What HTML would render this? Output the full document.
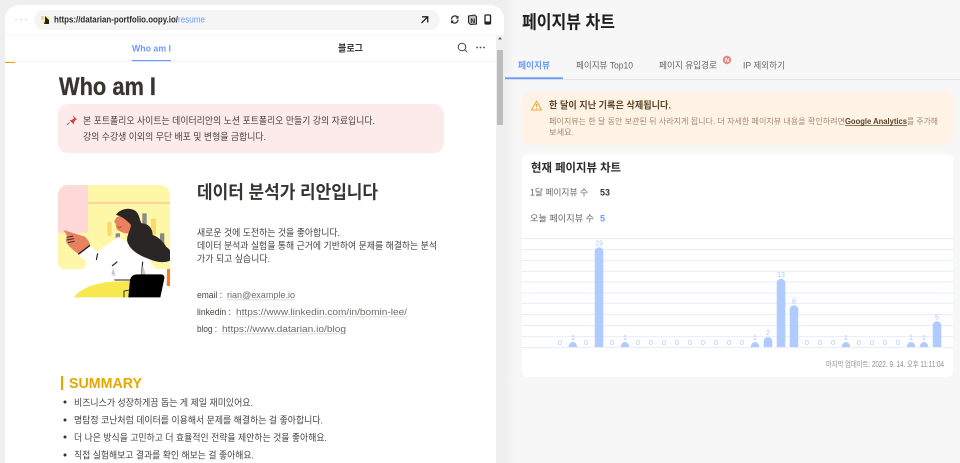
<!DOCTYPE html>
<html lang="ko"><head><meta charset="utf-8"><title>페이지뷰 차트</title>
<style>
html,body{margin:0;padding:0;width:960px;height:463px;overflow:hidden;background:#f7f7f7}
svg{display:block;filter:blur(.3px)}
text{font-family:"Liberation Sans","Noto Sans CJK KR",sans-serif;white-space:pre}
.t{fill:#45433f;font-size:9.5px}
.b{font-weight:700}
.g{fill:#6f6c68;font-size:9px}
.v{fill:#a8c4ff;font-size:7px;text-anchor:middle}
</style></head><body>
<svg width="960" height="463" viewBox="0 0 960 463" xmlns="http://www.w3.org/2000/svg">
<defs><linearGradient id="sh" x1="0" x2="1" y1="0" y2="0"><stop offset="0" stop-color="#eeeeee"/><stop offset="1" stop-color="#f7f7f7"/></linearGradient></defs>
<rect width="960" height="463" fill="#f7f7f7"/>
<rect x="504" width="10" height="463" fill="url(#sh)"/>
<rect x="0" width="504" height="463" fill="#efefef"/>
<path d="M5 463V19a14 14 0 0 1 14-14H490a14 14 0 0 1 14 14V463Z" fill="#fff"/>
<rect x="496" y="35" width="8" height="428" fill="#f0f0f0"/>
<rect x="497" y="50" width="6" height="75" fill="#bdbdbd"/>
<path d="M500 37l-2 2.400h4z" fill="#555"/>
<rect x="5" y="34.500" width="491" height="0.700" fill="#f0f0f0"/>
<rect x="5" y="61" width="491" height="0.700" fill="#f0f0f0"/>
<!-- browser bar -->
<circle cx="16" cy="19.500" r="1" fill="#e0e0e0"/><circle cx="21" cy="19.500" r="1" fill="#e0e0e0"/><circle cx="26" cy="19.500" r="1" fill="#e0e0e0"/>
<rect x="34" y="10" width="406" height="20" rx="10" fill="#f5f5f5"/>
<rect x="41" y="16" width="9" height="8" rx="1.500" fill="#fff3a8"/><rect x="41" y="16" width="3" height="4" fill="#f9c9c9"/><path d="M45 16l4 4v4h-5l1-3z" fill="#222"/>
<text x="54" y="22.500" font-size="9" class="b" fill="#2b2b2b" textLength="124" lengthAdjust="spacingAndGlyphs">https://datarian-portfolio.oopy.io/</text>
<text x="178" y="22.500" font-size="9" fill="#6a9bff" textLength="27" lengthAdjust="spacingAndGlyphs">resume</text>
<path d="M421.500 23l6-6M422 16.800h5.700v5.700" stroke="#222" stroke-width="1.300" fill="none"/>
<path d="M451.500 19.500a3.500 3.500 0 0 1 6-2.500M458 19.500a3.500 3.500 0 0 1-6 2.500" stroke="#222" stroke-width="1.200" fill="none"/><path d="M458.500 15.500v3h-3zM451 23.500v-3h3z" fill="#222"/>
<path d="M468.500 16l6-1 2 1.500v7.500l-6 .5-2-2z" fill="#bbb" stroke="#222" stroke-width="1"/><text x="470.500" y="23" font-size="6.500" class="b" fill="#222">N</text>
<rect x="485" y="15" width="5.500" height="9" rx="1" fill="#fff" stroke="#222" stroke-width="1.300"/><rect x="485" y="21.500" width="5.500" height="2.500" fill="#222"/>
<!-- nav -->
<text x="132" y="51.500" font-size="9.500" class="b" fill="#6a9bff" textLength="39" lengthAdjust="spacingAndGlyphs">Who am I</text>
<rect x="132" y="60" width="39" height="1.200" fill="#6a9bff"/>
<text x="338" y="51.500" font-size="9.500" class="b" fill="#37352f" textLength="25" lengthAdjust="spacingAndGlyphs">블로그</text>
<circle cx="462" cy="47" r="3.800" fill="none" stroke="#444" stroke-width="1"/><path d="M464.800 49.800l2.400 2.400" stroke="#444" stroke-width="1"/>
<circle cx="477" cy="47.500" r=".9" fill="#444"/><circle cx="480.500" cy="47.500" r=".9" fill="#444"/><circle cx="484" cy="47.500" r=".9" fill="#444"/>
<rect x="5" y="62" width="10" height="1" fill="#f0a800"/>
<!-- content -->
<text x="59" y="95" font-size="25" class="b" fill="#37352f" stroke="#37352f" stroke-width=".3" textLength="97" lengthAdjust="spacingAndGlyphs">Who am I</text>
<rect x="58" y="104" width="386" height="49" rx="10" fill="#fdeaea"/>
<path d="M72.500 115l4.500 4.500-1.500 .5-1.500 2.500-.2 2-4.300-4.300 2-.2 2.500-1.500z" fill="#d9433f"/><path d="M69.500 122.500l-2.500 2.500" stroke="#777" stroke-width=".9"/>
<text x="83" y="124" class="t" textLength="292" lengthAdjust="spacingAndGlyphs">본 포트폴리오 사이트는 데이터리안의 노션 포트폴리오 만들기 강의 자료입니다.</text>
<text x="83" y="140" class="t" textLength="183" lengthAdjust="spacingAndGlyphs">강의 수강생 이외의 무단 배포 및 변형을 금합니다.</text>
<!-- illustration -->
<path d="M58 263V195a10 10 0 0 1 10-10H160a10 10 0 0 1 10 10V269H64a6 6 0 0 1-6-6Z" fill="#fff7a8"/>
<path d="M58 233V195a10 10 0 0 1 10-10H88V233Z" fill="#ffd8d8"/>
<rect x="88" y="202" width="82" height="1.800" fill="#fbcf9f"/>
<g transform="translate(50 180) scale(.33333)">
<rect x="172" y="125" width="13" height="43" rx="5" fill="#fcd96f"/>
<rect x="277" y="100" width="13" height="35" fill="#8a8a8a"/>
<rect x="303" y="115" width="15" height="50" rx="5" fill="#fcd96f"/>
<rect x="330" y="160" width="13" height="30" fill="#8a8a8a"/>
<rect x="197" y="160" width="13" height="20" fill="#8a8a8a"/>
<path d="M85 225L120 195L140 215L205 170L250 200L300 240L335 300L360 352H72V268H100L110 245Z" fill="#fff"/>
<path d="M200 112C194 120 192 124 194 128L198 132C197 142 200 150 208 153L225 160L240 160L248 125L215 105Z" fill="#e9815f"/>
<path d="M198 105C208 88 235 80 255 92C270 102 268 122 275 130C295 130 308 145 308 165C325 170 345 190 348 200C355 205 360 210 360 212V242C345 250 318 246 300 238C270 228 240 212 232 185C228 170 240 155 243 135C232 122 215 108 198 105Z" fill="#2b2626"/>
<path d="M203 140C208 143 212 142 215 140" stroke="#7a3a28" stroke-width="2" fill="none"/>
<path d="M40 150L105 170C115 180 118 188 120 195L85 222C72 212 55 200 48 185L50 165Z" fill="#e9815f"/>
<path d="M85 223L120 196" stroke="#222" stroke-width="4"/>
<path d="M50 172L70 168M50 180L72 176M54 188L74 184" stroke="#333" stroke-width="3"/>
<path d="M143 220L139 240M202 245L186 258M278 245L275 285" stroke="#222" stroke-width="3.500"/>
<path d="M190 262L196 290L184 282ZM278 255L288 285L274 288Z" fill="#c9c9c9"/>
<path d="M72 352C85 330 130 308 190 305L240 303V352Z" fill="#f6e84e"/>
<path d="M193 300H240" stroke="#222" stroke-width="3"/>
<path d="M222 352V333L240 330" stroke="#333" stroke-width="3" fill="none"/>
<path d="M240 300C243 288 250 283 262 283H332C340 283 344 288 343 296L331 352H235Z" fill="#000"/>
<path d="M351 267H360V318H354C351 318 350 316 350 312Z" fill="#ff7a1f"/>
</g>
<!-- intro -->
<text x="197" y="198.500" font-size="18" class="b" fill="#37352f" textLength="181" lengthAdjust="spacingAndGlyphs">데이터 분석가 리안입니다</text>
<text x="197" y="236" class="t" textLength="143" lengthAdjust="spacingAndGlyphs">새로운 것에 도전하는 것을 좋아합니다.</text>
<text x="197" y="249" class="t" textLength="240" lengthAdjust="spacingAndGlyphs">데이터 분석과 실험을 통해 근거에 기반하여 문제를 해결하는 분석</text>
<text x="197" y="262" class="t" textLength="73" lengthAdjust="spacingAndGlyphs">가가 되고 싶습니다.</text>
<text x="197" y="298" class="t" textLength="25" lengthAdjust="spacingAndGlyphs">email :</text>
<text x="227" y="298" class="g" textLength="68" lengthAdjust="spacingAndGlyphs">rian@example.io</text><rect x="227" y="299.500" width="68" height=".7" fill="#ccc"/>
<text x="197" y="315" class="t" textLength="34" lengthAdjust="spacingAndGlyphs">linkedin :</text>
<text x="236" y="315" class="g" textLength="171" lengthAdjust="spacingAndGlyphs">https://www.linkedin.com/in/bomin-lee/</text><rect x="236" y="316.500" width="171" height=".7" fill="#ccc"/>
<text x="197" y="332" class="t" textLength="20" lengthAdjust="spacingAndGlyphs">blog :</text>
<text x="222" y="332" class="g" textLength="124" lengthAdjust="spacingAndGlyphs">https://www.datarian.io/blog</text><rect x="222" y="333.500" width="124" height=".7" fill="#ccc"/>
<!-- summary -->
<rect x="61" y="376" width="2.200" height="14" fill="#e5a800"/>
<text x="69" y="388" font-size="14.500" class="b" fill="#e5a800" textLength="73" lengthAdjust="spacingAndGlyphs">SUMMARY</text>
<circle cx="65" cy="402" r="1.500" fill="#333"/><circle cx="65" cy="420" r="1.500" fill="#333"/><circle cx="65" cy="437" r="1.500" fill="#333"/><circle cx="65" cy="455" r="1.500" fill="#333"/>
<text x="74" y="406" class="t" textLength="179" lengthAdjust="spacingAndGlyphs">비즈니스가 성장하게끔 돕는 게 제일 재미있어요.</text>
<text x="74" y="423.500" class="t" textLength="249" lengthAdjust="spacingAndGlyphs">명탐정 코난처럼 데이터를 이용해서 문제를 해결하는 걸 좋아합니다.</text>
<text x="74" y="441" class="t" textLength="253" lengthAdjust="spacingAndGlyphs">더 나은 방식을 고민하고 더 효율적인 전략을 제안하는 것을 좋아해요.</text>
<text x="74" y="458.500" class="t" textLength="180" lengthAdjust="spacingAndGlyphs">직접 실험해보고 결과를 확인 해보는 걸 좋아해요.</text>
<!-- right -->
<text x="522" y="28.500" font-size="18" class="b" fill="#1f1f1f" textLength="93" lengthAdjust="spacingAndGlyphs">페이지뷰 차트</text>
<rect x="505" y="79" width="455" height="1" fill="#e3e3e3"/>
<rect x="505" y="77.300" width="58" height="1.800" fill="#6a9bff"/>
<text x="518" y="68.500" font-size="9" class="b" fill="#6a9bff" textLength="32" lengthAdjust="spacingAndGlyphs">페이지뷰</text>
<text x="576" y="68.500" font-size="9" fill="#666" textLength="57" lengthAdjust="spacingAndGlyphs">페이지뷰 Top10</text>
<text x="659" y="68.500" font-size="9" fill="#666" textLength="58" lengthAdjust="spacingAndGlyphs">페이지 유입경로</text>
<circle cx="727" cy="60" r="4.200" fill="#e38b85"/><text x="727" y="62" font-size="5.500" class="b" fill="#fff" text-anchor="middle">N</text>
<text x="743" y="68.500" font-size="9" fill="#666" textLength="42" lengthAdjust="spacingAndGlyphs">IP 제외하기</text>
<rect x="522" y="92" width="431" height="53" rx="8" fill="#fff3e6"/>
<path d="M536.500 101l5 9h-10z" fill="none" stroke="#f0a73a" stroke-width="1.100" stroke-linejoin="round"/><path d="M536.500 104v3M536.500 108v1" stroke="#f0a73a" stroke-width="1"/>
<text x="549" y="108.500" font-size="9.500" class="b" fill="#5a4326" textLength="122" lengthAdjust="spacingAndGlyphs">한 달이 지난 기록은 삭제됩니다.</text>
<text x="549" y="124" font-size="8.200" fill="#a38c72" textLength="296" lengthAdjust="spacingAndGlyphs">페이지뷰는 한 달 동안 보관된 뒤 사라지게 됩니다. 더 자세한 페이지뷰 내용을 확인하려면</text>
<text x="845" y="124" font-size="8.500" class="b" fill="#5a4326" textLength="62" lengthAdjust="spacingAndGlyphs">Google Analytics</text><rect x="845" y="125.300" width="62" height=".7" fill="#5a4326"/>
<text x="907" y="124" font-size="8.200" fill="#a38c72" textLength="31" lengthAdjust="spacingAndGlyphs">를 주가해</text>
<text x="549" y="135" font-size="8.200" fill="#a38c72" textLength="25" lengthAdjust="spacingAndGlyphs">보세요.</text>
<!-- chart card -->
<rect x="522" y="154" width="431" height="223" rx="6" fill="#fff"/>
<text x="531" y="171.500" font-size="11.500" class="b" fill="#2b2b2b" textLength="90" lengthAdjust="spacingAndGlyphs">현재 페이지뷰 차트</text>
<text x="530" y="195.500" font-size="9" fill="#666" textLength="58" lengthAdjust="spacingAndGlyphs">1달 페이지뷰 수</text>
<text x="600" y="195.500" font-size="9" class="b" fill="#333" textLength="10" lengthAdjust="spacingAndGlyphs">53</text>
<text x="530" y="221.500" font-size="9" fill="#666" textLength="64" lengthAdjust="spacingAndGlyphs">오늘 페이지뷰 수</text>
<text x="600" y="221.500" font-size="9" class="b" fill="#6a9bff">5</text>
<g fill="#e6eeff">
<rect x="522" y="238" width="431" height="1.100"/><rect x="522" y="249" width="431" height="1.100"/><rect x="522" y="260" width="431" height="1.100"/><rect x="522" y="271" width="431" height="1.100"/><rect x="522" y="281.500" width="431" height="1.100"/><rect x="522" y="292.500" width="431" height="1.100"/><rect x="522" y="303" width="431" height="1.100"/><rect x="522" y="314" width="431" height="1.100"/><rect x="522" y="325" width="431" height="1.100"/><rect x="522" y="336" width="431" height="1.100"/><rect x="522" y="347" width="431" height="1.100"/>
</g>
<g fill="#b0cbff">
<path d="M568.500 347a4.300 5 0 0 1 8.600 0z"/>
<path d="M620.700 347a4.300 5 0 0 1 8.600 0z"/>
<path d="M750.700 347a4.300 5 0 0 1 8.600 0z"/>
<path d="M841.700 347a4.300 5 0 0 1 8.600 0z"/>
<path d="M906.700 347a4.300 5 0 0 1 8.600 0z"/>
<path d="M919.700 347a4.300 5 0 0 1 8.600 0z"/>
<path d="M594.700 347V251.500a4.300 4.300 0 0 1 8.600 0V347z"/>
<path d="M763.700 347v-5.700a4.300 4.300 0 0 1 8.600 0V347z"/>
<path d="M776.700 347V283a4.300 4.300 0 0 1 8.600 0V347z"/>
<path d="M789.700 347V309.600a4.300 4.300 0 0 1 8.600 0V347z"/>
<path d="M932.700 347V325.600a4.300 4.300 0 0 1 8.600 0V347z"/>
</g>
<g>
<text class="v" x="560" y="345">0</text><text class="v" x="573" y="340">1</text><text class="v" x="586" y="345">0</text><text class="v" x="599" y="245.500">19</text><text class="v" x="612" y="345">0</text><text class="v" x="625" y="340">1</text>
<text class="v" x="638" y="345">0</text><text class="v" x="651" y="345">0</text><text class="v" x="664" y="345">0</text><text class="v" x="677" y="345">0</text><text class="v" x="690" y="345">0</text><text class="v" x="703" y="345">0</text><text class="v" x="716" y="345">0</text><text class="v" x="729" y="345">0</text><text class="v" x="742" y="345">0</text>
<text class="v" x="755" y="340">1</text><text class="v" x="768" y="335">2</text><text class="v" x="781" y="277">13</text><text class="v" x="794" y="303.500">8</text>
<text class="v" x="807" y="345">0</text><text class="v" x="820" y="345">0</text><text class="v" x="833" y="345">0</text><text class="v" x="846" y="340">1</text><text class="v" x="859" y="345">0</text><text class="v" x="872" y="345">0</text><text class="v" x="885" y="345">0</text><text class="v" x="898" y="345">0</text>
<text class="v" x="911" y="340">1</text><text class="v" x="924" y="340">1</text><text class="v" x="937" y="319.500">5</text>
</g>
<text x="826" y="367" font-size="8" fill="#8f8f8f" textLength="118" lengthAdjust="spacingAndGlyphs">마지막 업데이트: 2022. 9. 14. 오후 11:11:04</text>
</svg>
</body></html>
